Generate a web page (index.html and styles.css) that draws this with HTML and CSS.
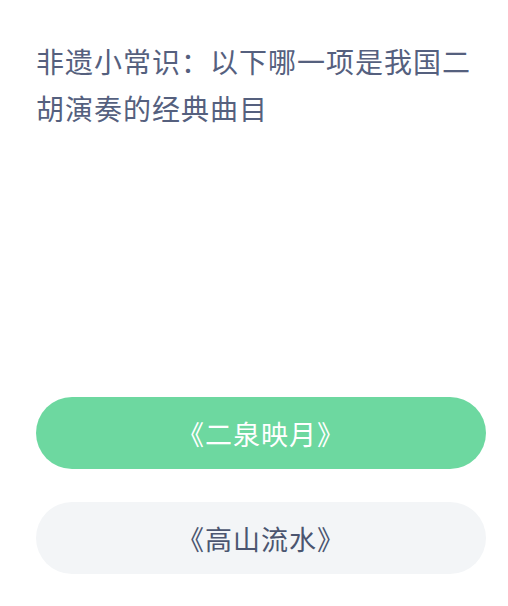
FILE: index.html
```html
<!DOCTYPE html>
<html lang="zh">
<head>
  <meta charset="UTF-8">
  <title>非遗小常识</title>
  <meta name="viewport" content="width=device-width, initial-scale=1.0">
  <link rel="stylesheet" href="styles.css">
</head>
<body>

  <div class="quiz">
    <p class="question">非遗小常识：以下哪一项是我国二胡演奏的经典曲目</p>

    <div class="options">
      <button class="option option-right">《二泉映月》</button>
      <button class="option">《高山流水》</button>
    </div>
  </div>

</body>
</html>
```

FILE: styles.css
```css
body {
  margin: 0;
  background-color: #ffffff;
  font-family: "Noto Sans CJK SC", "Noto Sans", sans-serif;
}

.quiz {
  padding: 38px 22px 0 36px;
}

.question {
  margin: 0;
  padding-right: 14px;
  font-size: 28px;
  line-height: 47px;
  letter-spacing: 1px;
  color: #55607e;
}

.options {
  margin-top: 265px;
  display: flex;
  flex-direction: column;
  gap: 33px;
}

.option {
  height: 72px;
  width: 100%;
  border: none;
  border-radius: 36px;
  background-color: #f3f5f7;
  color: #4b5570;
  font-family: inherit;
  font-size: 27px;
  letter-spacing: 1px;
}

.option-right {
  background-color: #6dd8a0;
  color: #ffffff;
}
```
